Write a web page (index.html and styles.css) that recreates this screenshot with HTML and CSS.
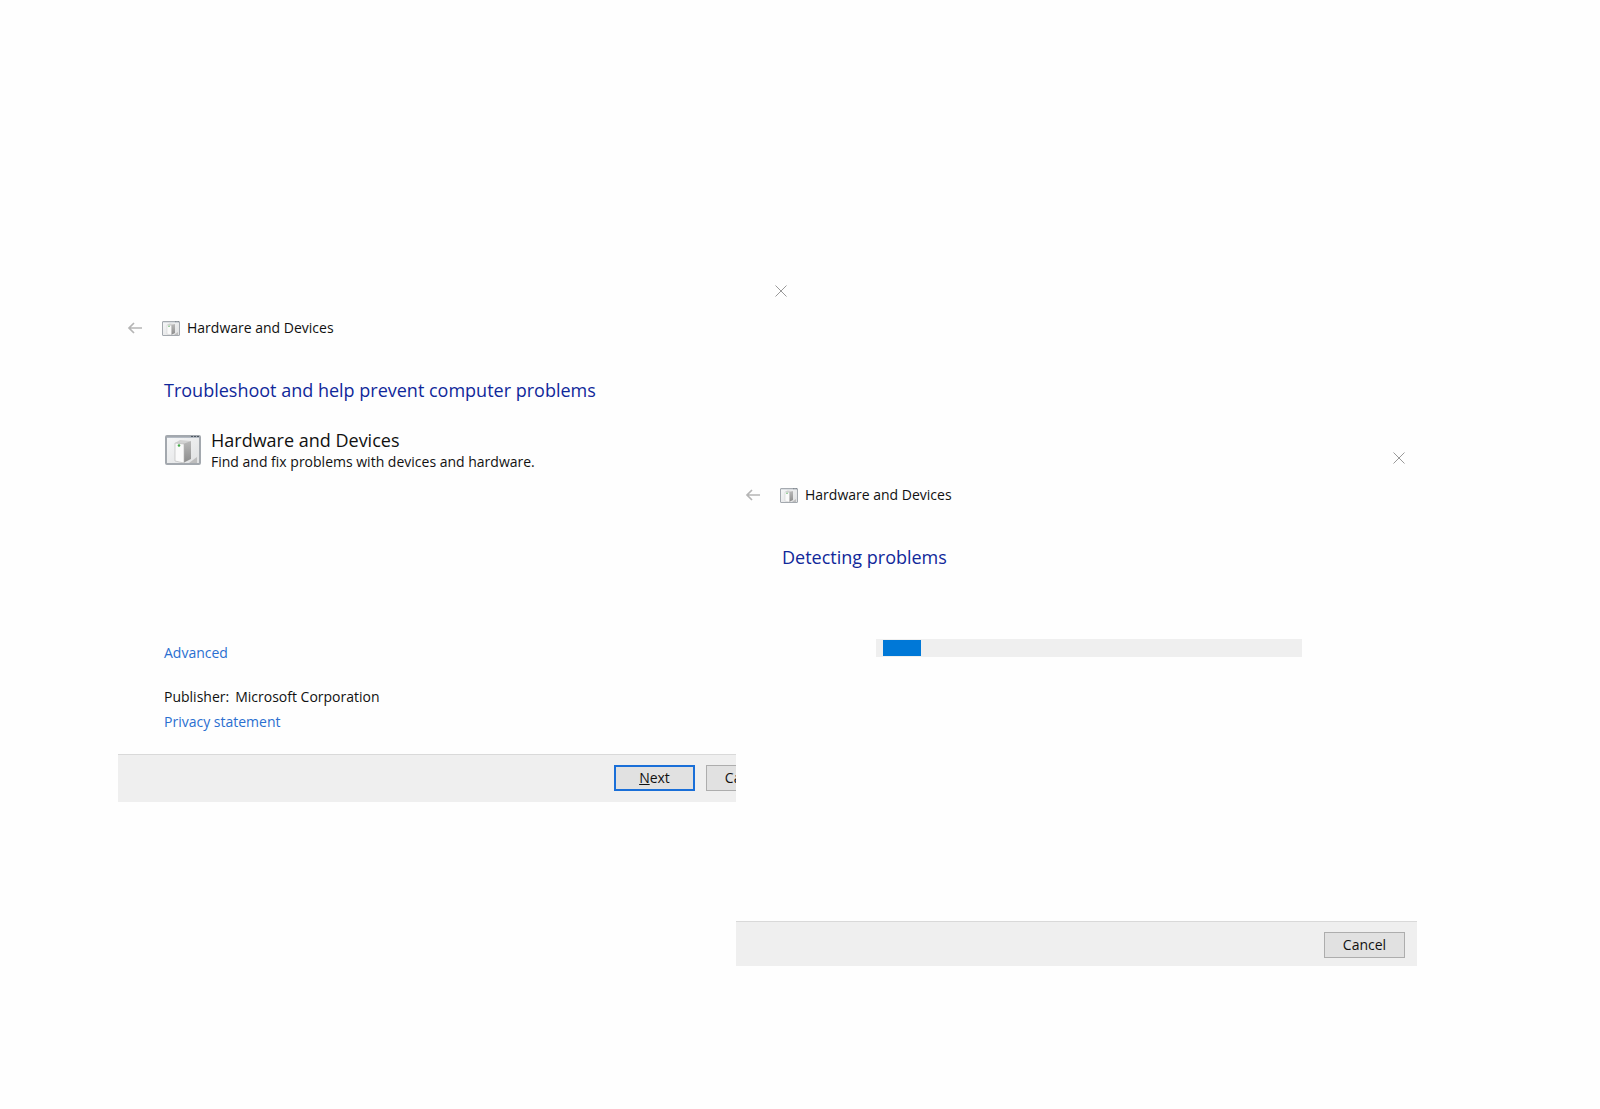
FILE: index.html
```html
<!DOCTYPE html>
<html lang="en">
<head>
<meta charset="utf-8">
<title>Hardware and Devices</title>
<link rel="stylesheet" href="styles.css">
</head>
<body>
<svg width="0" height="0" class="defs" aria-hidden="true">
  <defs>
    <linearGradient id="pane" x1="0" y1="0" x2="1" y2="1"><stop offset="0" stop-color="#f6f7f8"/><stop offset="1" stop-color="#dfe0e1"/></linearGradient>
    <linearGradient id="side" x1="0" y1="0" x2="0" y2="1"><stop offset="0" stop-color="#b9b9b9"/><stop offset="1" stop-color="#8b8b8b"/></linearGradient>
    <symbol id="device" viewBox="0 0 36 30">
      <rect x="1" y="1" width="34" height="28" rx="1" fill="url(#pane)" stroke="#a3a8ae" stroke-width="2"/>
      <path d="M2 2.500H34" stroke="#b4bbc4"/>
      <path d="M26 1.500h2m1 0h2m1 0h2" stroke="#4f5963"/>
      <path d="M24 28l8-6v6z" fill="#bdbdbd"/>
      <path d="M10 8l5-3 11 1-7 4z" fill="#d2d2d2"/>
      <path d="M18 9l8-3v18l-8 4z" fill="url(#side)"/>
      <path d="M10 8l9 1v19l-9-2z" fill="#fafafa" stroke="#b5b5b5" stroke-width=".6"/>
      <circle cx="14" cy="10.500" r="1.300" fill="#45a949"/>
    </symbol>
    <symbol id="back" viewBox="0 0 16 12"><path d="M15 6H2M7 1L2 6l5 5" fill="none" stroke="#b5b5b5" stroke-width="1.700"/></symbol>
    <symbol id="close" viewBox="0 0 12 12"><path d="M.5.5l11 11M11.500.5l-11 11" fill="none" stroke="#999"/></symbol>
  </defs>
</svg>
<main class="desktop">
  <section class="window window-intro">
    <div class="titlebar"><button class="icon-button" aria-label="Close"><svg width="12" height="12"><use href="#close"/></svg></button></div>
    <header class="nav">
      <button class="icon-button" aria-label="Back" disabled><svg width="16" height="12"><use href="#back"/></svg></button>
      <svg class="nav-icon" width="18" height="15"><use href="#device"/></svg>
      <span>Hardware and Devices</span>
    </header>
    <div class="content">
      <h1>Troubleshoot and help prevent computer problems</h1>
      <div class="package">
        <svg width="36" height="30"><use href="#device"/></svg>
        <div>
          <h2>Hardware and Devices</h2>
          <p>Find and fix problems with devices and hardware.</p>
        </div>
      </div>
      <div class="details">
        <a class="advanced" href="#advanced">Advanced</a>
        <p class="publisher"><span>Publisher:</span><span>Microsoft Corporation</span></p>
        <a href="#privacy">Privacy statement</a>
      </div>
    </div>
    <footer class="actions"><button class="button primary"><u>N</u>ext</button><button class="button">Cancel</button></footer>
  </section>
  <section class="window window-detect">
    <div class="titlebar"><button class="icon-button" aria-label="Close"><svg width="12" height="12"><use href="#close"/></svg></button></div>
    <header class="nav">
      <button class="icon-button" aria-label="Back" disabled><svg width="16" height="12"><use href="#back"/></svg></button>
      <svg class="nav-icon" width="18" height="15"><use href="#device"/></svg>
      <span>Hardware and Devices</span>
    </header>
    <div class="content">
      <h1>Detecting problems</h1>
      <div class="progress" role="progressbar" aria-label="Detecting problems"><div class="chunk"></div></div>
    </div>
    <footer class="actions"><button class="button">Cancel</button></footer>
  </section>
</main>
</body>
</html>
```
FILE: styles.css
```css
* { box-sizing: border-box; }
body { margin: 0; background: #fefefe; color: #111; font: 14px/20px "Open Sans", "Noto Sans", sans-serif; }
.defs { position: absolute; }
.desktop { position: relative; min-height: 100vh; overflow: hidden; }
h1, h2, p { margin: 0; font-weight: 400; }
a { color: #2a6fd0; text-decoration: none; }
svg { display: block; flex: none; }
button { font: inherit; color: inherit; }

.window { position: absolute; width: 681px; max-width: 100%; display: flex; flex-direction: column; background: #fefefe; }
.window-intro { left: 118px; top: 273px; min-height: 529px; }
.window-detect { left: 736px; top: 440px; min-height: 526px; }

.titlebar { display: flex; justify-content: flex-end; align-items: center; height: 36px; padding-right: 12px; }
.icon-button { padding: 0; border: 0; background: none; }
.nav { display: flex; align-items: center; height: 38px; padding-left: 9px; }
.nav-icon { margin: 0 7px 0 19px; }

.content { flex: 1; display: flex; flex-direction: column; padding: 29px 46px 0; }
h1 { font-size: 18px; line-height: 28px; color: #10289a; }
.package { display: flex; align-items: center; gap: 10px; margin-top: 24px; padding-left: 1px; }
h2 { font-size: 18px; line-height: 24px; }
.details { display: flex; flex-direction: column; align-items: flex-start; margin-top: auto; padding-bottom: 22px; }
.publisher { display: flex; gap: 6px; margin: 24px 0 5px; }

.actions { display: flex; justify-content: flex-end; gap: 11px; padding: 10px 12px 8px; background: #efefef; border-top: 1px solid #d9d9d9; }
.window-intro .actions { padding-bottom: 11px; }
.button { width: 81px; height: 26px; padding: 0; border: 1px solid #adadad; background: #e1e1e1; line-height: 20px; }
.primary { border: 2px solid #1a6fd8; }
.progress { height: 18px; margin: 68px 69px 0 94px; padding: 1px 7px; background: #efefef; }
.chunk { width: 38px; height: 16px; background: #0078d7; }
```
